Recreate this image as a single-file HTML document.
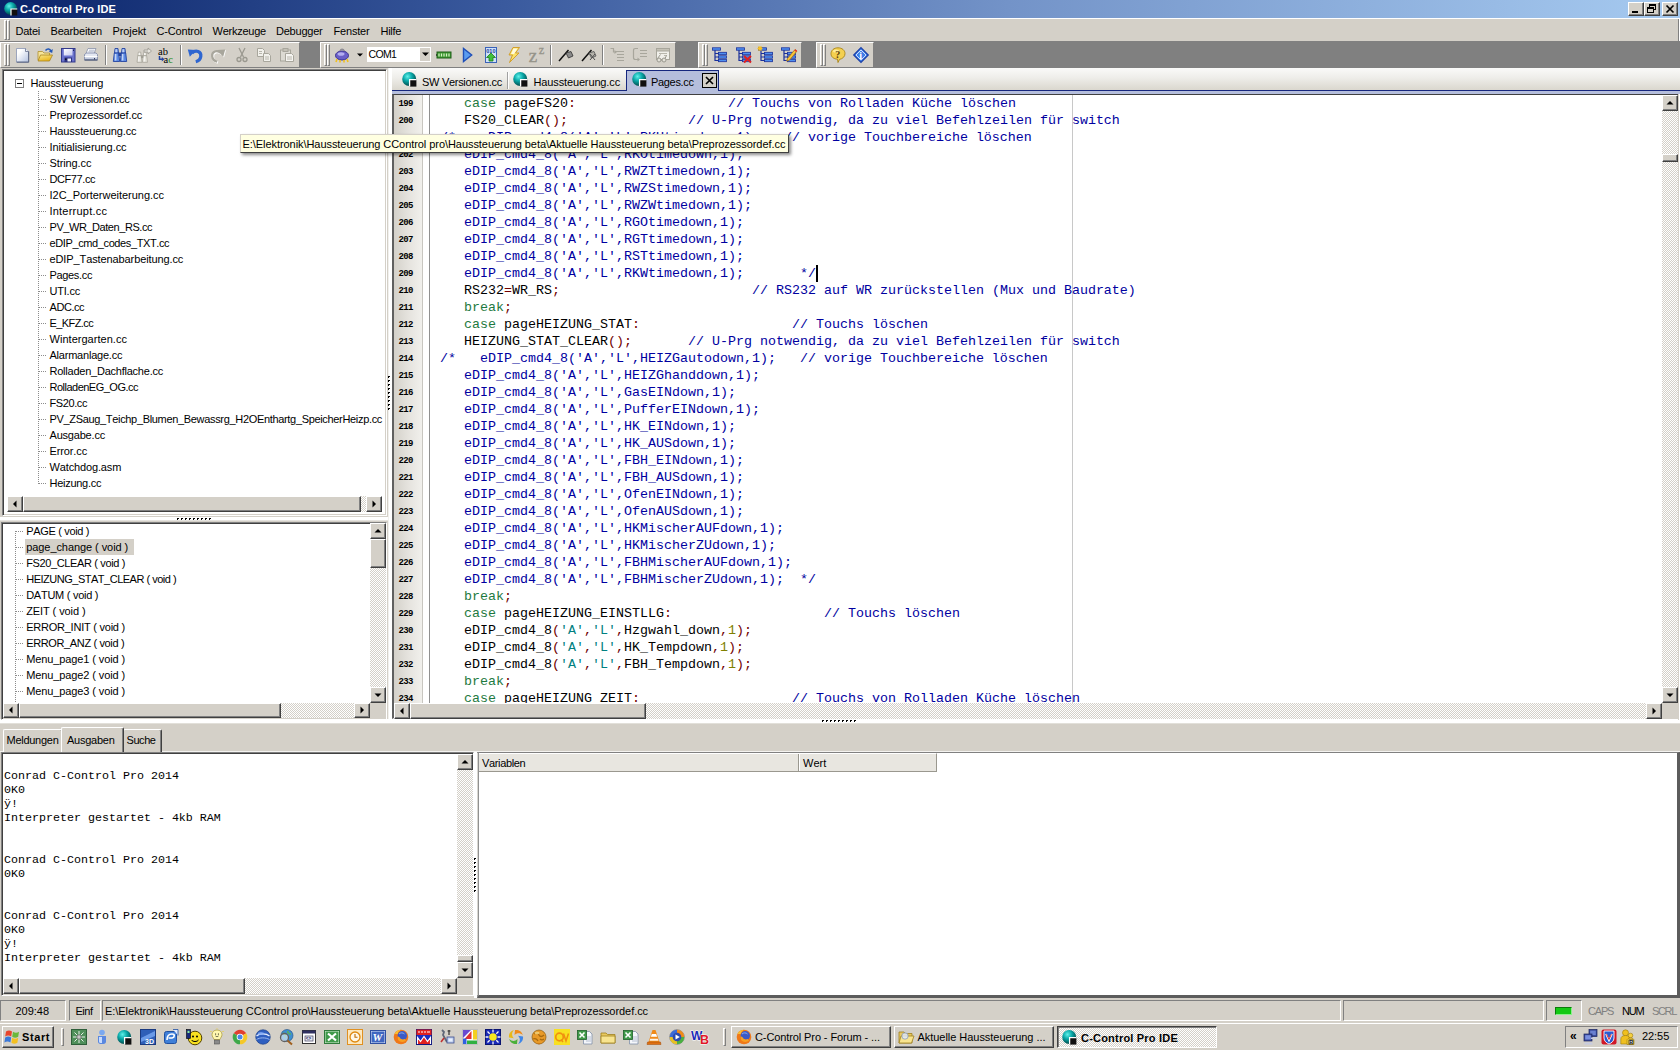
<!DOCTYPE html><html><head><meta charset="utf-8"><title>C-Control Pro IDE</title><style>
*{box-sizing:border-box;margin:0;padding:0}
html,body{width:1680px;height:1050px;overflow:hidden;background:#d4d0c8}
body{font-kerning:none;font-family:"Liberation Sans",sans-serif;font-size:11px;color:#000;position:relative}
.a{position:absolute}
.t{position:absolute;white-space:pre;line-height:13px;height:13px}
.rs{border:1px solid;border-color:#fff #404040 #404040 #fff;box-shadow:inset -1px -1px 0 #808080,inset 1px 1px 0 #d4d0c8;background:#d4d0c8}
.rs2{border:1px solid;border-color:#d4d0c8 #404040 #404040 #d4d0c8;box-shadow:inset -1px -1px 0 #808080,inset 1px 1px 0 #fff;background:#d4d0c8}
.sk{border:1px solid;border-color:#808080 #fff #fff #808080;box-shadow:inset 1px 1px 0 #404040,inset -1px -1px 0 #d4d0c8;background:#fff}
.sk1{border:1px solid;border-color:#808080 #fff #fff #808080}
.tr{background:repeating-conic-gradient(#fff 0 25%,#d4d0c8 0 50%) 0 0/2px 2px}
.band{position:absolute;top:42px;height:26px;background:#d4d0c8;border-top:1px solid #fff;border-left:1px solid #fff;border-right:1px solid #808080;border-bottom:1px solid #808080}
.grip{position:absolute;width:3px;border:1px solid;border-color:#fff #808080 #808080 #fff}
.sep{position:absolute;width:2px;border-left:1px solid #808080;border-right:1px solid #fff}
.mono{font-family:"Liberation Mono",monospace}
.code{position:absolute;left:432px;white-space:pre;font-family:"Liberation Mono",monospace;font-size:13.33px;line-height:17px;height:17px;color:#000}
.ln{position:absolute;left:398.5px;white-space:pre;font-family:"Liberation Mono",monospace;font-weight:bold;font-size:9px;line-height:17px;height:17px;color:#000;letter-spacing:-0.7px}
.k{color:#1e7a40}.c{color:#0000a0}.s{color:#700000}.q{color:#008080}.n{color:#808000}
svg{position:absolute;overflow:visible}
</style></head><body>
<div class="a " style="left:0px;top:0px;width:1680px;height:18px;background:linear-gradient(90deg,#0a246a 0%,#3a5a9e 30%,#7393c8 60%,#a6caf0 100%)"></div>
<svg style="left:3.8px;top:1.6px" width="13.8" height="13.8" viewBox="0 0 15 15"><defs><radialGradient id="cg1" cx="0.38" cy="0.32" r="0.7"><stop offset="0" stop-color="#5ff0e8"/><stop offset="0.45" stop-color="#0aa8a8"/><stop offset="1" stop-color="#004848"/></radialGradient></defs><circle cx="7.2" cy="7" r="7" fill="url(#cg1)"/><rect x="7.6" y="7.600" width="6.800" height="7" fill="#101010"/><path d="M7.600 14.600V7.600H14.400" fill="none" stroke="#fff" stroke-width="1.300"/></svg>
<div class="t " style="left:20px;top:2.5px;font-weight:bold;letter-spacing:0.147px;color:#fff">C-Control Pro IDE</div>
<div class="a rs" style="left:1628px;top:2px;width:16px;height:14px;"></div>
<div class="a rs" style="left:1644px;top:2px;width:16px;height:14px;"></div>
<div class="a rs" style="left:1662px;top:2px;width:16px;height:14px;"></div>
<svg style="left:1628px;top:2px" width="16" height="14" viewBox="0 0 16 14"><rect x="4" y="9" width="6" height="2" fill="#000"/></svg>
<svg style="left:1644px;top:2px" width="16" height="14" viewBox="0 0 16 14"><rect x="5.5" y="2.5" width="6" height="5" fill="none" stroke="#000"/><rect x="5" y="2" width="7" height="2" fill="#000"/><rect x="3.5" y="5.5" width="6" height="5" fill="#d4d0c8" stroke="#000"/><rect x="3" y="5" width="7" height="2" fill="#000"/></svg>
<svg style="left:1662px;top:2px" width="16" height="14" viewBox="0 0 16 14"><path d="M4.5 3.5l7 7M11.5 3.5l-7 7" stroke="#000" stroke-width="1.7" fill="none"/></svg>
<div class="a " style="left:0px;top:18px;width:1680px;height:1px;background:#fff"></div>
<div class="a " style="left:0px;top:19px;width:1680px;height:22px;background:#d4d0c8"></div>
<div class="a " style="left:1678px;top:19px;width:1px;height:22px;background:#808080"></div>
<div class="a " style="left:1679px;top:19px;width:1px;height:22px;background:#fff"></div>
<div class="a grip" style="left:4px;top:20px;width:3px;height:20px;"></div>
<div class="a grip" style="left:7px;top:20px;width:3px;height:20px;"></div>
<div class="t " style="left:15.5px;top:25px;letter-spacing:-0.236px;">Datei</div>
<div class="t " style="left:50.5px;top:25px;letter-spacing:-0.171px;">Bearbeiten</div>
<div class="t " style="left:112.5px;top:25px;letter-spacing:-0.105px;">Projekt</div>
<div class="t " style="left:156.5px;top:25px;letter-spacing:-0.174px;">C-Control</div>
<div class="t " style="left:212.5px;top:25px;letter-spacing:-0.237px;">Werkzeuge</div>
<div class="t " style="left:276px;top:25px;letter-spacing:-0.227px;">Debugger</div>
<div class="t " style="left:333.5px;top:25px;letter-spacing:-0.185px;">Fenster</div>
<div class="t " style="left:380.5px;top:25px;letter-spacing:-0.301px;">Hilfe</div>
<div class="a " style="left:0px;top:41px;width:1680px;height:27px;background:#808080"></div>
<div class="band" style="left:0px;width:300px"></div>
<div class="a grip" style="left:4px;top:44px;width:3px;height:22px;"></div>
<div class="a grip" style="left:7px;top:44px;width:3px;height:22px;"></div>
<div class="band" style="left:320px;width:356px"></div>
<div class="a grip" style="left:324px;top:44px;width:3px;height:22px;"></div>
<div class="a grip" style="left:327px;top:44px;width:3px;height:22px;"></div>
<div class="band" style="left:698px;width:104px"></div>
<div class="a grip" style="left:702px;top:44px;width:3px;height:22px;"></div>
<div class="a grip" style="left:705px;top:44px;width:3px;height:22px;"></div>
<div class="band" style="left:816px;width:58px"></div>
<div class="a grip" style="left:820px;top:44px;width:3px;height:22px;"></div>
<div class="a grip" style="left:823px;top:44px;width:3px;height:22px;"></div>
<svg style="left:15px;top:47px" width="16" height="16" viewBox="0 0 16 16"><defs><linearGradient id="gnew" x1="0" y1="0" x2="1" y2="1"><stop offset="0.25" stop-color="#fff"/><stop offset="1" stop-color="#b4c2e0"/></linearGradient></defs><path d="M1.5 1.5h9l3 3v10.500h-12z" fill="url(#gnew)" stroke="#8894b4" stroke-width="0.8"/><path d="M10.500 1.500v3h3" fill="#eef2fa" stroke="#66708c" stroke-width="0.8"/><path d="M13.700 4.500v10.700h-12" fill="none" stroke="#58627e" stroke-width="1"/></svg>
<svg style="left:37px;top:47px" width="16" height="16" viewBox="0 0 16 16"><defs><linearGradient id="gop" x1="0" y1="0" x2="0.6" y2="1"><stop offset="0" stop-color="#fbe88c"/><stop offset="1" stop-color="#e8b41c"/></linearGradient></defs><path d="M1 4.500h4.500l1.500 1.500h5.500V13H1z" fill="#f6e49a" stroke="#b09030" stroke-width="0.8"/><path d="M3.500 8h12l-3 6H1z" fill="url(#gop)" stroke="#a88420" stroke-width="0.8"/><path d="M8.500 3.500c1.800-2.200 4.500-2 5.500 0.800" fill="none" stroke="#2458b8" stroke-width="1.500"/><path d="M15.800 2l-0.600 4-3.400-1.500z" fill="#2458b8"/></svg>
<svg style="left:60px;top:47px" width="16" height="16" viewBox="0 0 16 16"><defs><linearGradient id="gsv" x1="0" y1="0" x2="1" y2="1"><stop offset="0" stop-color="#fff"/><stop offset="1" stop-color="#c4c8f0"/></linearGradient></defs><rect x="1.500" y="1.500" width="13.500" height="13.500" fill="#6a72cc" stroke="#343a8c"/><rect x="3.800" y="2" width="8.700" height="6.500" fill="url(#gsv)"/><rect x="13" y="2.500" width="1" height="1.500" fill="#20245c"/><rect x="4.500" y="10.500" width="7.500" height="4.500" fill="#2c3180"/><rect x="7.500" y="11.500" width="3.500" height="3" fill="#f0f2fc"/><rect x="5" y="11.500" width="1.500" height="1.500" fill="#0c0c20"/></svg>
<svg style="left:83px;top:47px" width="16" height="16" viewBox="0 0 16 16"><path d="M5 1.500h8l-2 5H3z" fill="#fff" stroke="#8890a8" stroke-width="0.8"/><path d="M6 3.200h5.500M5.300 4.800h5.500" stroke="#a0a8c0" stroke-width="0.8"/><path d="M1.500 7.500L3.500 6h9.500l1.500 1.500v5h-13z" fill="#e4e8f2" stroke="#7884a4" stroke-width="0.8"/><path d="M1.500 9.500h13" stroke="#fff"/><rect x="2" y="10.500" width="12" height="2.500" fill="#c4cce0"/><path d="M1.500 13h13" stroke="#4c5878" stroke-width="1.400"/><rect x="11" y="11" width="1" height="1.500" fill="#384060"/></svg>
<svg style="left:112px;top:47px" width="16" height="16" viewBox="0 0 16 16"><path d="M3 1.500h3l0.500 4.500h-4z" fill="#86a8ec" stroke="#2444a0" stroke-width="0.9"/><path d="M10 1.500h3l0.500 4.500h-4z" fill="#86a8ec" stroke="#2444a0" stroke-width="0.9"/><path d="M2.300 6h4.400l1 8.500H1.300z" fill="#5c8ae4" stroke="#2444a0" stroke-width="0.9"/><path d="M9.300 6h4.400l1 8.500H8.300z" fill="#5c8ae4" stroke="#2444a0" stroke-width="0.9"/><rect x="6.500" y="5.500" width="3" height="3.500" fill="#2444a0"/><rect x="2.800" y="7" width="1.600" height="6.500" fill="#fff" opacity="0.65"/><rect x="9.800" y="7" width="1.600" height="6.500" fill="#fff" opacity="0.65"/><rect x="3.500" y="2.300" width="1.200" height="3" fill="#fff" opacity="0.6"/><rect x="10.500" y="2.300" width="1.200" height="3" fill="#fff" opacity="0.6"/></svg>
<svg style="left:136px;top:47px" width="16" height="16" viewBox="0 0 16 16"><g transform="translate(0,4) scale(0.78)"><path d="M3 1.500h3l0.500 4.500h-4z" fill="#f2f0ea" stroke="#a09e94" stroke-width="0.9"/><path d="M10 1.500h3l0.500 4.500h-4z" fill="#f2f0ea" stroke="#a09e94" stroke-width="0.9"/><path d="M2.300 6h4.400l1 8.500H1.300z" fill="#e6e4dc" stroke="#a09e94" stroke-width="0.9"/><path d="M9.300 6h4.400l1 8.500H8.300z" fill="#e6e4dc" stroke="#a09e94" stroke-width="0.9"/><rect x="6.500" y="5.500" width="3" height="3.500" fill="#a09e94"/><rect x="2.800" y="7" width="1.600" height="6.500" fill="#fff" opacity="0.65"/><rect x="9.800" y="7" width="1.600" height="6.500" fill="#fff" opacity="0.65"/><rect x="3.500" y="2.300" width="1.200" height="3" fill="#fff" opacity="0.6"/><rect x="10.500" y="2.300" width="1.200" height="3" fill="#fff" opacity="0.6"/></g><path d="M8 3h4V1l3.5 3L12 7V5H8z" fill="#e8e6e0" stroke="#9a988f" stroke-width="0.8"/></svg>
<svg style="left:158px;top:47px" width="16" height="16" viewBox="0 0 16 16"><text x="0" y="7.500" font-family="Liberation Serif,serif" font-size="10.5" fill="#000">ab</text><text x="5.500" y="15.500" font-family="Liberation Serif,serif" font-size="10.5" fill="#000">a</text><text x="10.300" y="15.500" font-family="Liberation Serif,serif" font-size="10.5" fill="#1c8a1c">c</text><path d="M1.500 9v3.300h3" fill="none" stroke="#2444a0" stroke-width="1.500"/><path d="M3.800 10l2.700 2.300-2.700 2.300z" fill="#2444a0"/></svg>
<svg style="left:187px;top:47px" width="16" height="16" viewBox="0 0 16 16"><g><path d="M5 6C9 2.500 14.500 4.500 13.800 9.500c-0.400 2.700-2.300 4.500-5 5.200" fill="none" stroke="#2f66d0" stroke-width="3.2"/><path d="M0.800 2.500l8.200 0.500-6.200 6.800z" fill="#2f66d0"/></g></svg>
<svg style="left:210px;top:47px" width="16" height="16" viewBox="0 0 16 16"><g transform="translate(0.8,0.8)"><g transform="translate(16,0) scale(-1,1)"><path d="M5 6C9 2.500 14.500 4.500 13.800 9.500c-0.400 2.700-2.300 4.500-5 5.200" fill="none" stroke="#fff" stroke-width="2.4"/><path d="M0.800 2.500l8.200 0.500-6.200 6.800z" fill="#fff"/></g></g><g transform="translate(16,0) scale(-1,1)"><path d="M5 6C9 2.500 14.500 4.500 13.800 9.500c-0.400 2.700-2.300 4.500-5 5.200" fill="none" stroke="#a8a69c" stroke-width="2.2"/><path d="M0.800 2.500l8.200 0.500-6.200 6.800z" fill="#a8a69c"/></g></svg>
<svg style="left:234px;top:47px" width="16" height="16" viewBox="0 0 16 16"><path d="M5 1l4.5 9M11 1L6.5 10" stroke="#9a988f" stroke-width="1.3" fill="none"/><circle cx="5" cy="12.5" r="2" fill="none" stroke="#9a988f" stroke-width="1.3"/><circle cx="11" cy="12.5" r="2" fill="none" stroke="#9a988f" stroke-width="1.3"/></svg>
<svg style="left:256px;top:47px" width="16" height="16" viewBox="0 0 16 16"><path d="M1.5 1.5h5l2 2v6h-7z" fill="#f2f1ec" stroke="#a8a69c"/><path d="M7.5 6.5h5l2 2v6h-7z" fill="#f2f1ec" stroke="#a8a69c"/><path d="M3 4.5h3M3 6.5h3M9 10h4M9 12h4" stroke="#b8b6ac"/></svg>
<svg style="left:279px;top:47px" width="16" height="16" viewBox="0 0 16 16"><rect x="1.5" y="3" width="10" height="11" fill="#dcdad2" stroke="#a8a69c"/><rect x="4" y="1.5" width="5" height="3" fill="#c4c1b6" stroke="#a8a69c"/><path d="M6.5 6.5h6l2 2v6h-8z" fill="#f6f5f1" stroke="#a8a69c"/><path d="M8 10h5M8 12h5" stroke="#b8b6ac"/></svg>
<svg style="left:334px;top:47px" width="16" height="16" viewBox="0 0 16 16"><ellipse cx="8" cy="8.5" rx="6.5" ry="4.5" fill="#6a5fc8" stroke="#3a3190"/><ellipse cx="7" cy="7" rx="3.5" ry="1.8" fill="#b4aef0"/><path d="M6 4c1-2.5 3-2.5 4.5 0" fill="none" stroke="#8a8890" stroke-width="1.3"/><path d="M3 12l-1 3M6 13v2.5M10 13v2.5M13 12l1 3" stroke="#f0c020" stroke-width="1.6"/></svg>
<svg style="left:436px;top:47px" width="16" height="16" viewBox="0 0 16 16"><rect x="1" y="5" width="14" height="6" fill="#3f9a32" stroke="#1f5c18"/><path d="M3 6.5v3M5.5 6.5v3M8 6.5v3M10.5 6.5v3M13 6.5v3" stroke="#d8f0c8" stroke-width="1.2"/><path d="M0 8h1" stroke="#000"/></svg>
<svg style="left:460px;top:47px" width="16" height="16" viewBox="0 0 16 16"><path d="M3.500 1.500v13l8.200-6.500z" fill="#5a9cf0" stroke="#1f4fb8" stroke-width="1.400"/></svg>
<svg style="left:483px;top:47px" width="16" height="16" viewBox="0 0 16 16"><rect x="2.5" y="0.5" width="11" height="15" fill="#cfe2fa" stroke="#3a62b8"/><text x="3.3" y="5.5" font-family="Liberation Sans,sans-serif" font-size="5.5" font-weight="bold" fill="#1f3f9a">010</text><path d="M8 6l4.5 4.5H10V14H6v-3.5H3.5z" fill="#3fc03a" stroke="#1f7a1c" stroke-width="0.8"/></svg>
<svg style="left:506px;top:47px" width="16" height="16" viewBox="0 0 16 16"><path d="M7 0.500h6.500L9.500 6h3.500L3.500 15.500 6.500 8H3z" fill="#fbe26a" stroke="#d09a20" stroke-width="0.9"/><path d="M7.500 1.500h4l-3.500 5.500h-3z" fill="#fffbe0"/></svg>
<svg style="left:529px;top:47px" width="16" height="16" viewBox="0 0 16 16"><text x="-0.300" y="15" font-family="Liberation Serif,serif" font-size="19" fill="#96948a" stroke="#96948a" stroke-width="0.4">z</text><text x="9.800" y="7" font-family="Liberation Serif,serif" font-size="12.5" fill="#96948a" stroke="#96948a" stroke-width="0.3">z</text></svg>
<svg style="left:558px;top:47px" width="16" height="16" viewBox="0 0 16 16"><path d="M1 14L10.5 3" stroke="#101010" stroke-width="1.5"/><path d="M8 6l5-1.5 2 4.5-4.5 2z" fill="#8a8a8a" stroke="#303030" stroke-width="0.8"/></svg>
<svg style="left:581px;top:47px" width="16" height="16" viewBox="0 0 16 16"><path d="M1 14L10.5 3" stroke="#101010" stroke-width="1.5"/><path d="M8 6l5-1.5 2 4.5-4.5 2z" fill="#b4b2aa" stroke="#505050" stroke-width="0.8"/><path d="M9 7l5 6M14 7l-5 6" stroke="#505050"/></svg>
<svg style="left:609px;top:47px" width="16" height="16" viewBox="0 0 16 16"><path d="M6 4.5h9M8 7.5h7M8 10.5h7M8 13.5h7" stroke="#a8a69c" stroke-width="1.2"/><path d="M1.5 1.5h3v3.5h2" fill="none" stroke="#a8a69c" stroke-width="1.2"/><path d="M5.5 3l2.5 2-2.5 2z" fill="#a8a69c"/></svg>
<svg style="left:632px;top:47px" width="16" height="16" viewBox="0 0 16 16"><path d="M8 3.5h7M8 6.5h7M8 9.5h7" stroke="#a8a69c" stroke-width="1.2"/><path d="M6 1.5H3.5C2 1.5 1.5 2 1.5 3.5v7c0 1.5 0.5 2 2 2H6" fill="none" stroke="#a8a69c" stroke-width="1.2"/><path d="M5.5 10.5l2.5 2-2.5 2z" fill="#a8a69c"/></svg>
<svg style="left:655px;top:47px" width="16" height="16" viewBox="0 0 16 16"><rect x="1.5" y="1.5" width="13" height="11" fill="#f0efea" stroke="#a8a69c"/><rect x="1.5" y="1.5" width="13" height="2.5" fill="#c4c1b6" stroke="#a8a69c"/><path d="M4 6.5h8M9 8.5h3" stroke="#b8b6ac"/><circle cx="4" cy="13" r="2" fill="#e4e2da" stroke="#9a988f"/><circle cx="9" cy="13" r="2" fill="#e4e2da" stroke="#9a988f"/><path d="M6 13h1M2.5 11.5l3-4M10 11.5l1.5-3" stroke="#9a988f"/></svg>
<svg style="left:712px;top:47px" width="16" height="16" viewBox="0 0 16 16"><path d="M3 3v10.5h4M3 6.5h4M3 10h4" fill="none" stroke="#1a2f9a" stroke-width="1.2"/><rect x="0.5" y="0.8" width="8" height="2.4" fill="#4f8ff0" stroke="#1a2f9a" stroke-width="0.8"/><rect x="6.5" y="5.3" width="8" height="2.4" fill="#4f8ff0" stroke="#1a2f9a" stroke-width="0.8"/><rect x="6.5" y="8.8" width="8" height="2.4" fill="#4f8ff0" stroke="#1a2f9a" stroke-width="0.8"/><rect x="6.5" y="12.3" width="8" height="2.4" fill="#4f8ff0" stroke="#1a2f9a" stroke-width="0.8"/></svg>
<svg style="left:736px;top:47px" width="16" height="16" viewBox="0 0 16 16"><path d="M3 3v10.5h4M3 6.5h4M3 10h4" fill="none" stroke="#1a2f9a" stroke-width="1.2"/><rect x="0.5" y="0.8" width="8" height="2.4" fill="#4f8ff0" stroke="#1a2f9a" stroke-width="0.8"/><rect x="6.5" y="5.3" width="8" height="2.4" fill="#4f8ff0" stroke="#1a2f9a" stroke-width="0.8"/><rect x="6.5" y="8.8" width="8" height="2.4" fill="#4f8ff0" stroke="#1a2f9a" stroke-width="0.8"/><rect x="6.5" y="12.3" width="8" height="2.4" fill="#4f8ff0" stroke="#1a2f9a" stroke-width="0.8"/><path d="M8 9l7 6.5M15 9l-7 6.5" stroke="#e02020" stroke-width="2"/></svg>
<svg style="left:758px;top:47px" width="16" height="16" viewBox="0 0 16 16"><path d="M3 3v10.5h4M3 6.5h4M3 10h4" fill="none" stroke="#1a2f9a" stroke-width="1.2"/><rect x="0.5" y="0.8" width="8" height="2.4" fill="#4f8ff0" stroke="#1a2f9a" stroke-width="0.8"/><rect x="6.5" y="5.3" width="8" height="2.4" fill="#4f8ff0" stroke="#1a2f9a" stroke-width="0.8"/><rect x="6.5" y="8.8" width="8" height="2.4" fill="#4f8ff0" stroke="#1a2f9a" stroke-width="0.8"/><rect x="6.5" y="12.3" width="8" height="2.4" fill="#4f8ff0" stroke="#1a2f9a" stroke-width="0.8"/><path d="M2 -1v5M-0.5 1.5h5M0.2 -0.3l3.6 3.6M3.8 -0.3l-3.6 3.6" stroke="#f8c020" stroke-width="1.1"/></svg>
<svg style="left:781px;top:47px" width="16" height="16" viewBox="0 0 16 16"><path d="M3 3v10.5h4M3 6.5h4M3 10h4" fill="none" stroke="#1a2f9a" stroke-width="1.2"/><rect x="0.5" y="0.8" width="8" height="2.4" fill="#4f8ff0" stroke="#1a2f9a" stroke-width="0.8"/><rect x="6.5" y="5.3" width="8" height="2.4" fill="#4f8ff0" stroke="#1a2f9a" stroke-width="0.8"/><rect x="6.5" y="8.8" width="8" height="2.4" fill="#4f8ff0" stroke="#1a2f9a" stroke-width="0.8"/><rect x="6.5" y="12.3" width="8" height="2.4" fill="#4f8ff0" stroke="#1a2f9a" stroke-width="0.8"/><path d="M6.5 11.5L14 2.5l2 1.6-7.5 9-2.8 1z" fill="#f8c43a" stroke="#b07a10" stroke-width="0.8"/><path d="M13.2 3.4l2 1.6 1-1.2-2-1.6z" fill="#e03030"/></svg>
<svg style="left:830px;top:47px" width="16" height="16" viewBox="0 0 16 16"><path d="M8 0.8c4 0 7 2.5 7 5.8 0 3-2.3 5.2-5.5 5.8L8 15.5l-0.5-3.3C3.5 12 1 9.8 1 6.6 1 3.3 4 0.8 8 0.8z" fill="#f4d050" stroke="#a88418" stroke-width="0.9"/><ellipse cx="6" cy="4" rx="3" ry="1.6" fill="#fff4b0" opacity="0.8"/><text x="5.2" y="10.5" font-family="Liberation Serif,serif" font-size="10" font-weight="bold" fill="#5a3c08">?</text></svg>
<svg style="left:853px;top:47px" width="16" height="16" viewBox="0 0 16 16"><path d="M8 0.7L15.3 8 8 15.3 0.7 8z" fill="#3f7fe8" stroke="#1a3fa8" stroke-width="1.2"/><path d="M8 3L13 8 8 13 3 8z" fill="none" stroke="#dfeaff" stroke-width="0.9"/><text x="6.2" y="11.5" font-family="Liberation Serif,serif" font-size="10" font-weight="bold" fill="#fff">i</text></svg>
<div class="sep" style="left:105px;top:45px;height:20px"></div>
<div class="sep" style="left:180px;top:45px;height:20px"></div>
<div class="sep" style="left:550px;top:45px;height:20px"></div>
<div class="sep" style="left:602px;top:45px;height:20px"></div>
<svg style="left:355px;top:47px" width="10" height="16" viewBox="0 0 10 16"><polygon points="2,6.5 8,6.5 5,9.5" fill="#000"/></svg>
<div class="a " style="left:367px;top:47px;width:64px;height:15px;background:#fff"></div>
<div class="t " style="left:368.5px;top:48px;font-size:10.5px;letter-spacing:-0.634px;">COM1</div>
<div class="a " style="left:420px;top:48px;width:10px;height:13px;background:#d4d0c8"></div>
<svg style="left:420px;top:46px" width="11" height="16" viewBox="0 0 11 16"><polygon points="2,6.5 9,6.5 5.5,10" fill="#000"/></svg>
<div class="a " style="left:0px;top:719px;width:1680px;height:5px;background:linear-gradient(180deg,#fff 0,#fff 70%,#d4d0c8 100%)"></div>
<div class="a " style="left:388px;top:68px;width:4px;height:651px;background:linear-gradient(90deg,#e8e6e0 0,#fff 30%,#fff 100%)"></div>
<div class="a " style="left:0px;top:517px;width:388px;height:4px;background:linear-gradient(180deg,#fff 0,#fff 70%,#d4d0c8 100%)"></div>
<div class="a " style="left:474px;top:752px;width:3px;height:246px;background:#fff"></div>
<div class="a sk" style="left:2px;top:69px;width:385px;height:447px;"></div>
<div class="a " style="left:15px;top:79px;width:9px;height:9px;border:1px solid #808080;background:#fff"></div>
<div class="a " style="left:17px;top:83px;width:5px;height:1px;background:#000"></div>
<div class="t " style="left:30.5px;top:77px;letter-spacing:-0.154px;">Haussteuerung</div>
<div class="a " style="left:38px;top:91px;width:1px;height:393px;background:repeating-linear-gradient(180deg,#8c8c8c 0 1px,transparent 1px 2px)"></div>
<div class="a " style="left:39px;top:99px;width:8px;height:1px;background:repeating-linear-gradient(90deg,#8c8c8c 0 1px,transparent 1px 2px)"></div>
<div class="t " style="left:49.5px;top:93px;letter-spacing:-0.291px;">SW Versionen.cc</div>
<div class="a " style="left:39px;top:115px;width:8px;height:1px;background:repeating-linear-gradient(90deg,#8c8c8c 0 1px,transparent 1px 2px)"></div>
<div class="t " style="left:49.5px;top:109px;letter-spacing:-0.115px;">Preprozessordef.cc</div>
<div class="a " style="left:39px;top:131px;width:8px;height:1px;background:repeating-linear-gradient(90deg,#8c8c8c 0 1px,transparent 1px 2px)"></div>
<div class="t " style="left:49.5px;top:125px;letter-spacing:-0.104px;">Haussteuerung.cc</div>
<div class="a " style="left:39px;top:147px;width:8px;height:1px;background:repeating-linear-gradient(90deg,#8c8c8c 0 1px,transparent 1px 2px)"></div>
<div class="t " style="left:49.5px;top:141px;letter-spacing:-0.070px;">Initialisierung.cc</div>
<div class="a " style="left:39px;top:163px;width:8px;height:1px;background:repeating-linear-gradient(90deg,#8c8c8c 0 1px,transparent 1px 2px)"></div>
<div class="t " style="left:49.5px;top:157px;letter-spacing:-0.110px;">String.cc</div>
<div class="a " style="left:39px;top:179px;width:8px;height:1px;background:repeating-linear-gradient(90deg,#8c8c8c 0 1px,transparent 1px 2px)"></div>
<div class="t " style="left:49.5px;top:173px;letter-spacing:-0.412px;">DCF77.cc</div>
<div class="a " style="left:39px;top:195px;width:8px;height:1px;background:repeating-linear-gradient(90deg,#8c8c8c 0 1px,transparent 1px 2px)"></div>
<div class="t " style="left:49.5px;top:189px;letter-spacing:-0.020px;">I2C_Porterweiterung.cc</div>
<div class="a " style="left:39px;top:211px;width:8px;height:1px;background:repeating-linear-gradient(90deg,#8c8c8c 0 1px,transparent 1px 2px)"></div>
<div class="t " style="left:49.5px;top:205px;letter-spacing:0.215px;">Interrupt.cc</div>
<div class="a " style="left:39px;top:227px;width:8px;height:1px;background:repeating-linear-gradient(90deg,#8c8c8c 0 1px,transparent 1px 2px)"></div>
<div class="t " style="left:49.5px;top:221px;letter-spacing:-0.444px;">PV_WR_Daten_RS.cc</div>
<div class="a " style="left:39px;top:243px;width:8px;height:1px;background:repeating-linear-gradient(90deg,#8c8c8c 0 1px,transparent 1px 2px)"></div>
<div class="t " style="left:49.5px;top:237px;letter-spacing:-0.384px;">eDIP_cmd_codes_TXT.cc</div>
<div class="a " style="left:39px;top:259px;width:8px;height:1px;background:repeating-linear-gradient(90deg,#8c8c8c 0 1px,transparent 1px 2px)"></div>
<div class="t " style="left:49.5px;top:253px;letter-spacing:-0.106px;">eDIP_Tastenabarbeitung.cc</div>
<div class="a " style="left:39px;top:275px;width:8px;height:1px;background:repeating-linear-gradient(90deg,#8c8c8c 0 1px,transparent 1px 2px)"></div>
<div class="t " style="left:49.5px;top:269px;letter-spacing:-0.331px;">Pages.cc</div>
<div class="a " style="left:39px;top:291px;width:8px;height:1px;background:repeating-linear-gradient(90deg,#8c8c8c 0 1px,transparent 1px 2px)"></div>
<div class="t " style="left:49.5px;top:285px;letter-spacing:-0.213px;">UTI.cc</div>
<div class="a " style="left:39px;top:307px;width:8px;height:1px;background:repeating-linear-gradient(90deg,#8c8c8c 0 1px,transparent 1px 2px)"></div>
<div class="t " style="left:49.5px;top:301px;letter-spacing:-0.447px;">ADC.cc</div>
<div class="a " style="left:39px;top:323px;width:8px;height:1px;background:repeating-linear-gradient(90deg,#8c8c8c 0 1px,transparent 1px 2px)"></div>
<div class="t " style="left:49.5px;top:317px;letter-spacing:-0.586px;">E_KFZ.cc</div>
<div class="a " style="left:39px;top:339px;width:8px;height:1px;background:repeating-linear-gradient(90deg,#8c8c8c 0 1px,transparent 1px 2px)"></div>
<div class="t " style="left:49.5px;top:333px;letter-spacing:0.032px;">Wintergarten.cc</div>
<div class="a " style="left:39px;top:355px;width:8px;height:1px;background:repeating-linear-gradient(90deg,#8c8c8c 0 1px,transparent 1px 2px)"></div>
<div class="t " style="left:49.5px;top:349px;letter-spacing:-0.222px;">Alarmanlage.cc</div>
<div class="a " style="left:39px;top:371px;width:8px;height:1px;background:repeating-linear-gradient(90deg,#8c8c8c 0 1px,transparent 1px 2px)"></div>
<div class="t " style="left:49.5px;top:365px;letter-spacing:-0.233px;">Rolladen_Dachflache.cc</div>
<div class="a " style="left:39px;top:387px;width:8px;height:1px;background:repeating-linear-gradient(90deg,#8c8c8c 0 1px,transparent 1px 2px)"></div>
<div class="t " style="left:49.5px;top:381px;letter-spacing:-0.506px;">RolladenEG_OG.cc</div>
<div class="a " style="left:39px;top:403px;width:8px;height:1px;background:repeating-linear-gradient(90deg,#8c8c8c 0 1px,transparent 1px 2px)"></div>
<div class="t " style="left:49.5px;top:397px;letter-spacing:-0.407px;">FS20.cc</div>
<div class="a " style="left:39px;top:419px;width:8px;height:1px;background:repeating-linear-gradient(90deg,#8c8c8c 0 1px,transparent 1px 2px)"></div>
<div class="t " style="left:49.5px;top:413px;letter-spacing:-0.328px;">PV_ZSaug_Teichp_Blumen_Bewassrg_H2OEnthartg_SpeicherHeizp.cc</div>
<div class="a " style="left:39px;top:435px;width:8px;height:1px;background:repeating-linear-gradient(90deg,#8c8c8c 0 1px,transparent 1px 2px)"></div>
<div class="t " style="left:49.5px;top:429px;letter-spacing:-0.198px;">Ausgabe.cc</div>
<div class="a " style="left:39px;top:451px;width:8px;height:1px;background:repeating-linear-gradient(90deg,#8c8c8c 0 1px,transparent 1px 2px)"></div>
<div class="t " style="left:49.5px;top:445px;letter-spacing:-0.125px;">Error.cc</div>
<div class="a " style="left:39px;top:467px;width:8px;height:1px;background:repeating-linear-gradient(90deg,#8c8c8c 0 1px,transparent 1px 2px)"></div>
<div class="t " style="left:49.5px;top:461px;letter-spacing:-0.139px;">Watchdog.asm</div>
<div class="a " style="left:39px;top:483px;width:8px;height:1px;background:repeating-linear-gradient(90deg,#8c8c8c 0 1px,transparent 1px 2px)"></div>
<div class="t " style="left:49.5px;top:477px;letter-spacing:-0.271px;">Heizung.cc</div>
<div class="a tr" style="left:7px;top:496px;width:375px;height:16px;"></div>
<div class="a rs" style="left:7px;top:496px;width:16px;height:16px;"></div>
<svg style="left:7px;top:496px" width="16" height="16" viewBox="0 0 16 16"><polygon points="9.5,4.5 9.5,11.5 6,8" fill="#000"/></svg>
<div class="a rs" style="left:366px;top:496px;width:16px;height:16px;"></div>
<svg style="left:366px;top:496px" width="16" height="16" viewBox="0 0 16 16"><polygon points="6.5,4.5 6.5,11.5 10,8" fill="#000"/></svg>
<div class="a rs" style="left:23px;top:496px;width:338px;height:16px;"></div>
<div class="a " style="left:177px;top:518px;width:2px;height:2px;background:#000"></div>
<div class="a " style="left:178px;top:519px;width:2px;height:1px;background:#fff"></div>
<div class="a " style="left:181px;top:518px;width:2px;height:2px;background:#000"></div>
<div class="a " style="left:182px;top:519px;width:2px;height:1px;background:#fff"></div>
<div class="a " style="left:185px;top:518px;width:2px;height:2px;background:#000"></div>
<div class="a " style="left:186px;top:519px;width:2px;height:1px;background:#fff"></div>
<div class="a " style="left:189px;top:518px;width:2px;height:2px;background:#000"></div>
<div class="a " style="left:190px;top:519px;width:2px;height:1px;background:#fff"></div>
<div class="a " style="left:193px;top:518px;width:2px;height:2px;background:#000"></div>
<div class="a " style="left:194px;top:519px;width:2px;height:1px;background:#fff"></div>
<div class="a " style="left:197px;top:518px;width:2px;height:2px;background:#000"></div>
<div class="a " style="left:198px;top:519px;width:2px;height:1px;background:#fff"></div>
<div class="a " style="left:201px;top:518px;width:2px;height:2px;background:#000"></div>
<div class="a " style="left:202px;top:519px;width:2px;height:1px;background:#fff"></div>
<div class="a " style="left:205px;top:518px;width:2px;height:2px;background:#000"></div>
<div class="a " style="left:206px;top:519px;width:2px;height:1px;background:#fff"></div>
<div class="a " style="left:209px;top:518px;width:2px;height:2px;background:#000"></div>
<div class="a " style="left:210px;top:519px;width:2px;height:1px;background:#fff"></div>
<div class="a sk" style="left:1px;top:522px;width:386px;height:198px;"></div>
<div class="a " style="left:25px;top:539px;width:109px;height:16px;background:#d4d0c8"></div>
<div class="a " style="left:15px;top:531px;width:1px;height:171px;background:repeating-linear-gradient(180deg,#8c8c8c 0 1px,transparent 1px 2px)"></div>
<div class="a " style="left:16px;top:531px;width:8px;height:1px;background:repeating-linear-gradient(90deg,#8c8c8c 0 1px,transparent 1px 2px)"></div>
<div class="t " style="left:26.2px;top:525px;letter-spacing:-0.326px;">PAGE ( void )</div>
<div class="a " style="left:16px;top:547px;width:8px;height:1px;background:repeating-linear-gradient(90deg,#8c8c8c 0 1px,transparent 1px 2px)"></div>
<div class="t " style="left:26.2px;top:541px;letter-spacing:-0.068px;">page_change ( void )</div>
<div class="a " style="left:16px;top:563px;width:8px;height:1px;background:repeating-linear-gradient(90deg,#8c8c8c 0 1px,transparent 1px 2px)"></div>
<div class="t " style="left:26.2px;top:557px;letter-spacing:-0.366px;">FS20_CLEAR ( void )</div>
<div class="a " style="left:16px;top:579px;width:8px;height:1px;background:repeating-linear-gradient(90deg,#8c8c8c 0 1px,transparent 1px 2px)"></div>
<div class="t " style="left:26.2px;top:573px;letter-spacing:-0.489px;">HEIZUNG_STAT_CLEAR ( void )</div>
<div class="a " style="left:16px;top:595px;width:8px;height:1px;background:repeating-linear-gradient(90deg,#8c8c8c 0 1px,transparent 1px 2px)"></div>
<div class="t " style="left:26.2px;top:589px;letter-spacing:-0.270px;">DATUM ( void )</div>
<div class="a " style="left:16px;top:611px;width:8px;height:1px;background:repeating-linear-gradient(90deg,#8c8c8c 0 1px,transparent 1px 2px)"></div>
<div class="t " style="left:26.2px;top:605px;letter-spacing:-0.093px;">ZEIT ( void )</div>
<div class="a " style="left:16px;top:627px;width:8px;height:1px;background:repeating-linear-gradient(90deg,#8c8c8c 0 1px,transparent 1px 2px)"></div>
<div class="t " style="left:26.2px;top:621px;letter-spacing:-0.236px;">ERROR_INIT ( void )</div>
<div class="a " style="left:16px;top:643px;width:8px;height:1px;background:repeating-linear-gradient(90deg,#8c8c8c 0 1px,transparent 1px 2px)"></div>
<div class="t " style="left:26.2px;top:637px;letter-spacing:-0.362px;">ERROR_ANZ ( void )</div>
<div class="a " style="left:16px;top:659px;width:8px;height:1px;background:repeating-linear-gradient(90deg,#8c8c8c 0 1px,transparent 1px 2px)"></div>
<div class="t " style="left:26.2px;top:653px;letter-spacing:-0.110px;">Menu_page1 ( void )</div>
<div class="a " style="left:16px;top:675px;width:8px;height:1px;background:repeating-linear-gradient(90deg,#8c8c8c 0 1px,transparent 1px 2px)"></div>
<div class="t " style="left:26.2px;top:669px;letter-spacing:-0.110px;">Menu_page2 ( void )</div>
<div class="a " style="left:16px;top:691px;width:8px;height:1px;background:repeating-linear-gradient(90deg,#8c8c8c 0 1px,transparent 1px 2px)"></div>
<div class="t " style="left:26.2px;top:685px;letter-spacing:-0.110px;">Menu_page3 ( void )</div>
<div class="a tr" style="left:370px;top:523px;width:16px;height:180px;"></div>
<div class="a rs" style="left:370px;top:523px;width:16px;height:16px;"></div>
<svg style="left:370px;top:523px" width="16" height="16" viewBox="0 0 16 16"><polygon points="4.5,9.5 11.5,9.5 8,6" fill="#000"/></svg>
<div class="a rs" style="left:370px;top:687px;width:16px;height:16px;"></div>
<svg style="left:370px;top:687px" width="16" height="16" viewBox="0 0 16 16"><polygon points="4.5,6.5 11.5,6.5 8,10" fill="#000"/></svg>
<div class="a rs" style="left:370px;top:539px;width:16px;height:29px;"></div>
<div class="a tr" style="left:3px;top:703px;width:367px;height:15px;"></div>
<div class="a rs" style="left:3px;top:703px;width:16px;height:15px;"></div>
<svg style="left:3px;top:702px" width="16" height="16" viewBox="0 0 16 16"><polygon points="9.5,4.5 9.5,11.5 6,8" fill="#000"/></svg>
<div class="a rs" style="left:354px;top:703px;width:16px;height:15px;"></div>
<svg style="left:354px;top:702px" width="16" height="16" viewBox="0 0 16 16"><polygon points="6.5,4.5 6.5,11.5 10,8" fill="#000"/></svg>
<div class="a rs" style="left:19px;top:703px;width:262px;height:15px;"></div>
<div class="a " style="left:370px;top:703px;width:16px;height:15px;background:#d4d0c8"></div>
<div class="a " style="left:388px;top:376px;width:2px;height:2px;background:#000"></div>
<div class="a " style="left:389px;top:377px;width:1px;height:2px;background:#fff"></div>
<div class="a " style="left:388px;top:380px;width:2px;height:2px;background:#000"></div>
<div class="a " style="left:389px;top:381px;width:1px;height:2px;background:#fff"></div>
<div class="a " style="left:388px;top:384px;width:2px;height:2px;background:#000"></div>
<div class="a " style="left:389px;top:385px;width:1px;height:2px;background:#fff"></div>
<div class="a " style="left:388px;top:388px;width:2px;height:2px;background:#000"></div>
<div class="a " style="left:389px;top:389px;width:1px;height:2px;background:#fff"></div>
<div class="a " style="left:388px;top:392px;width:2px;height:2px;background:#000"></div>
<div class="a " style="left:389px;top:393px;width:1px;height:2px;background:#fff"></div>
<div class="a " style="left:388px;top:396px;width:2px;height:2px;background:#000"></div>
<div class="a " style="left:389px;top:397px;width:1px;height:2px;background:#fff"></div>
<div class="a " style="left:388px;top:400px;width:2px;height:2px;background:#000"></div>
<div class="a " style="left:389px;top:401px;width:1px;height:2px;background:#fff"></div>
<div class="a " style="left:388px;top:404px;width:2px;height:2px;background:#000"></div>
<div class="a " style="left:389px;top:405px;width:1px;height:2px;background:#fff"></div>
<div class="a " style="left:388px;top:408px;width:2px;height:2px;background:#000"></div>
<div class="a " style="left:389px;top:409px;width:1px;height:2px;background:#fff"></div>
<div class="a " style="left:392px;top:68px;width:1288px;height:22px;background:linear-gradient(180deg,#fafaf9 0%,#eeede9 45%,#dad7ce 100%)"></div>
<div class="a " style="left:392px;top:90px;width:1288px;height:1px;background:#16277e"></div>
<div class="a " style="left:392px;top:91px;width:1288px;height:3px;background:#b5bedc"></div>
<div class="a " style="left:626px;top:70px;width:93px;height:21px;background:#b5bedc;border:1px solid #16277e;border-bottom:none"></div>
<svg style="left:402px;top:72px" width="15" height="15" viewBox="0 0 15 15"><defs><radialGradient id="cg2" cx="0.38" cy="0.32" r="0.7"><stop offset="0" stop-color="#5ff0e8"/><stop offset="0.45" stop-color="#0aa8a8"/><stop offset="1" stop-color="#004848"/></radialGradient></defs><circle cx="7.2" cy="7" r="7" fill="url(#cg2)"/><rect x="7.6" y="7.600" width="6.800" height="7" fill="#101010"/><path d="M7.600 14.600V7.600H14.400" fill="none" stroke="#fff" stroke-width="1.300"/></svg>
<div class="t " style="left:422px;top:76px;letter-spacing:-0.291px;">SW Versionen.cc</div>
<div class="a " style="left:507px;top:72px;width:1px;height:17px;background:#a0a0a0"></div>
<div class="a " style="left:508px;top:72px;width:1px;height:17px;background:#fff"></div>
<svg style="left:513px;top:72px" width="15" height="15" viewBox="0 0 15 15"><defs><radialGradient id="cg3" cx="0.38" cy="0.32" r="0.7"><stop offset="0" stop-color="#5ff0e8"/><stop offset="0.45" stop-color="#0aa8a8"/><stop offset="1" stop-color="#004848"/></radialGradient></defs><circle cx="7.2" cy="7" r="7" fill="url(#cg3)"/><rect x="7.6" y="7.600" width="6.800" height="7" fill="#101010"/><path d="M7.600 14.600V7.600H14.400" fill="none" stroke="#fff" stroke-width="1.300"/></svg>
<div class="t " style="left:533.5px;top:76px;letter-spacing:-0.135px;">Haussteuerung.cc</div>
<svg style="left:632px;top:72px" width="15" height="15" viewBox="0 0 15 15"><defs><radialGradient id="cg4" cx="0.38" cy="0.32" r="0.7"><stop offset="0" stop-color="#5ff0e8"/><stop offset="0.45" stop-color="#0aa8a8"/><stop offset="1" stop-color="#004848"/></radialGradient></defs><circle cx="7.2" cy="7" r="7" fill="url(#cg4)"/><rect x="7.6" y="7.600" width="6.800" height="7" fill="#101010"/><path d="M7.600 14.600V7.600H14.400" fill="none" stroke="#fff" stroke-width="1.300"/></svg>
<div class="t " style="left:651px;top:76px;letter-spacing:-0.318px;">Pages.cc</div>
<div class="a " style="left:702px;top:73px;width:15px;height:15px;border:1px solid #000;background:#d4d0c8"></div>
<svg style="left:702px;top:73px" width="15" height="15" viewBox="0 0 15 15"><path d="M4 4l7 7M11 4l-7 7" stroke="#000" stroke-width="1.6" fill="none"/></svg>
<div class="a " style="left:392px;top:94px;width:1288px;height:625px;background:#fff;border-top:1px solid #404040;border-left:2px solid #606060;border-bottom:1px solid #fff"></div>
<div class="a " style="left:394px;top:95px;width:28px;height:608px;background:linear-gradient(90deg,#d4d1ca 0%,#e6e4df 55%,#f1f0ec 100%)"></div>
<div class="a " style="left:422px;top:95px;width:1px;height:608px;background:#c8c6c0"></div>
<div class="a " style="left:423px;top:95px;width:6px;height:608px;background:#fff"></div>
<div class="a " style="left:429px;top:95px;width:1px;height:608px;background:#909090"></div>
<div class="a " style="left:1072px;top:95px;width:1px;height:608px;background:#c8c8c8"></div>
<div class="a" style="left:392px;top:95px;width:1270px;height:608px;overflow:hidden"><div class="a" style="left:-392px;top:-95px;width:1680px;height:1050px">
<div class="ln" style="top:96px">199</div>
<div class="code" style="top:95.25px">    <span class="k">case</span> pageFS20<span class="s">:</span>                   <span class="c">// Touchs von Rolladen Küche löschen</span></div>
<div class="ln" style="top:113px">200</div>
<div class="code" style="top:112.25px">    FS20_CLEAR<span class="s">(</span><span class="s">)</span><span class="s">;</span>               <span class="c">// U-Prg notwendig, da zu viel Befehlzeilen für switch</span></div>
<div class="ln" style="top:130px">201</div>
<div class="code" style="top:129.25px"><span class="c"> /*   eDIP_cmd4_8(&#x27;A&#x27;,&#x27;L&#x27;,RKUtimedown,1);   // vorige Touchbereiche löschen</span></div>
<div class="ln" style="top:147px">202</div>
<div class="code" style="top:146.25px"><span class="c">    eDIP_cmd4_8(&#x27;A&#x27;,&#x27;L&#x27;,RKOtimedown,1);</span></div>
<div class="ln" style="top:164px">203</div>
<div class="code" style="top:163.25px"><span class="c">    eDIP_cmd4_8(&#x27;A&#x27;,&#x27;L&#x27;,RWZTtimedown,1);</span></div>
<div class="ln" style="top:181px">204</div>
<div class="code" style="top:180.25px"><span class="c">    eDIP_cmd4_8(&#x27;A&#x27;,&#x27;L&#x27;,RWZStimedown,1);</span></div>
<div class="ln" style="top:198px">205</div>
<div class="code" style="top:197.25px"><span class="c">    eDIP_cmd4_8(&#x27;A&#x27;,&#x27;L&#x27;,RWZWtimedown,1);</span></div>
<div class="ln" style="top:215px">206</div>
<div class="code" style="top:214.25px"><span class="c">    eDIP_cmd4_8(&#x27;A&#x27;,&#x27;L&#x27;,RGOtimedown,1);</span></div>
<div class="ln" style="top:232px">207</div>
<div class="code" style="top:231.25px"><span class="c">    eDIP_cmd4_8(&#x27;A&#x27;,&#x27;L&#x27;,RGTtimedown,1);</span></div>
<div class="ln" style="top:249px">208</div>
<div class="code" style="top:248.25px"><span class="c">    eDIP_cmd4_8(&#x27;A&#x27;,&#x27;L&#x27;,RSTtimedown,1);</span></div>
<div class="ln" style="top:266px">209</div>
<div class="code" style="top:265.25px"><span class="c">    eDIP_cmd4_8(&#x27;A&#x27;,&#x27;L&#x27;,RKWtimedown,1);       */</span></div>
<div class="ln" style="top:283px">210</div>
<div class="code" style="top:282.25px">    RS232<span class="s">=</span>WR_RS<span class="s">;</span>                        <span class="c">// RS232 auf WR zurückstellen (Mux und Baudrate)</span></div>
<div class="ln" style="top:300px">211</div>
<div class="code" style="top:299.25px">    <span class="k">break</span><span class="s">;</span></div>
<div class="ln" style="top:317px">212</div>
<div class="code" style="top:316.25px">    <span class="k">case</span> pageHEIZUNG_STAT<span class="s">:</span>                   <span class="c">// Touchs löschen</span></div>
<div class="ln" style="top:334px">213</div>
<div class="code" style="top:333.25px">    HEIZUNG_STAT_CLEAR<span class="s">(</span><span class="s">)</span><span class="s">;</span>       <span class="c">// U-Prg notwendig, da zu viel Befehlzeilen für switch</span></div>
<div class="ln" style="top:351px">214</div>
<div class="code" style="top:350.25px"><span class="c"> /*   eDIP_cmd4_8(&#x27;A&#x27;,&#x27;L&#x27;,HEIZGautodown,1);   // vorige Touchbereiche löschen</span></div>
<div class="ln" style="top:368px">215</div>
<div class="code" style="top:367.25px"><span class="c">    eDIP_cmd4_8(&#x27;A&#x27;,&#x27;L&#x27;,HEIZGhanddown,1);</span></div>
<div class="ln" style="top:385px">216</div>
<div class="code" style="top:384.25px"><span class="c">    eDIP_cmd4_8(&#x27;A&#x27;,&#x27;L&#x27;,GasEINdown,1);</span></div>
<div class="ln" style="top:402px">217</div>
<div class="code" style="top:401.25px"><span class="c">    eDIP_cmd4_8(&#x27;A&#x27;,&#x27;L&#x27;,PufferEINdown,1);</span></div>
<div class="ln" style="top:419px">218</div>
<div class="code" style="top:418.25px"><span class="c">    eDIP_cmd4_8(&#x27;A&#x27;,&#x27;L&#x27;,HK_EINdown,1);</span></div>
<div class="ln" style="top:436px">219</div>
<div class="code" style="top:435.25px"><span class="c">    eDIP_cmd4_8(&#x27;A&#x27;,&#x27;L&#x27;,HK_AUSdown,1);</span></div>
<div class="ln" style="top:453px">220</div>
<div class="code" style="top:452.25px"><span class="c">    eDIP_cmd4_8(&#x27;A&#x27;,&#x27;L&#x27;,FBH_EINdown,1);</span></div>
<div class="ln" style="top:470px">221</div>
<div class="code" style="top:469.25px"><span class="c">    eDIP_cmd4_8(&#x27;A&#x27;,&#x27;L&#x27;,FBH_AUSdown,1);</span></div>
<div class="ln" style="top:487px">222</div>
<div class="code" style="top:486.25px"><span class="c">    eDIP_cmd4_8(&#x27;A&#x27;,&#x27;L&#x27;,OfenEINdown,1);</span></div>
<div class="ln" style="top:504px">223</div>
<div class="code" style="top:503.25px"><span class="c">    eDIP_cmd4_8(&#x27;A&#x27;,&#x27;L&#x27;,OfenAUSdown,1);</span></div>
<div class="ln" style="top:521px">224</div>
<div class="code" style="top:520.25px"><span class="c">    eDIP_cmd4_8(&#x27;A&#x27;,&#x27;L&#x27;,HKMischerAUFdown,1);</span></div>
<div class="ln" style="top:538px">225</div>
<div class="code" style="top:537.25px"><span class="c">    eDIP_cmd4_8(&#x27;A&#x27;,&#x27;L&#x27;,HKMischerZUdown,1);</span></div>
<div class="ln" style="top:555px">226</div>
<div class="code" style="top:554.25px"><span class="c">    eDIP_cmd4_8(&#x27;A&#x27;,&#x27;L&#x27;,FBHMischerAUFdown,1);</span></div>
<div class="ln" style="top:572px">227</div>
<div class="code" style="top:571.25px"><span class="c">    eDIP_cmd4_8(&#x27;A&#x27;,&#x27;L&#x27;,FBHMischerZUdown,1);  */</span></div>
<div class="ln" style="top:589px">228</div>
<div class="code" style="top:588.25px">    <span class="k">break</span><span class="s">;</span></div>
<div class="ln" style="top:606px">229</div>
<div class="code" style="top:605.25px">    <span class="k">case</span> pageHEIZUNG_EINSTLLG<span class="s">:</span>                   <span class="c">// Touchs löschen</span></div>
<div class="ln" style="top:623px">230</div>
<div class="code" style="top:622.25px">    eDIP_cmd4_8<span class="s">(</span><span class="q">&#x27;A&#x27;</span><span class="s">,</span><span class="q">&#x27;L&#x27;</span><span class="s">,</span>Hzgwahl_down<span class="s">,</span><span class="n">1</span><span class="s">)</span><span class="s">;</span></div>
<div class="ln" style="top:640px">231</div>
<div class="code" style="top:639.25px">    eDIP_cmd4_8<span class="s">(</span><span class="q">&#x27;A&#x27;</span><span class="s">,</span><span class="q">&#x27;L&#x27;</span><span class="s">,</span>HK_Tempdown<span class="s">,</span><span class="n">1</span><span class="s">)</span><span class="s">;</span></div>
<div class="ln" style="top:657px">232</div>
<div class="code" style="top:656.25px">    eDIP_cmd4_8<span class="s">(</span><span class="q">&#x27;A&#x27;</span><span class="s">,</span><span class="q">&#x27;L&#x27;</span><span class="s">,</span>FBH_Tempdown<span class="s">,</span><span class="n">1</span><span class="s">)</span><span class="s">;</span></div>
<div class="ln" style="top:674px">233</div>
<div class="code" style="top:673.25px">    <span class="k">break</span><span class="s">;</span></div>
<div class="ln" style="top:691px">234</div>
<div class="code" style="top:690.25px">    <span class="k">case</span> pageHEIZUNG_ZEIT<span class="s">:</span>                   <span class="c">// Touchs von Rolladen Küche löschen</span></div>
</div></div>
<div class="a " style="left:816px;top:265px;width:2px;height:17px;background:#000"></div>
<div class="a tr" style="left:1662px;top:95px;width:16px;height:608px;"></div>
<div class="a rs" style="left:1662px;top:95px;width:16px;height:16px;"></div>
<svg style="left:1662px;top:95px" width="16" height="16" viewBox="0 0 16 16"><polygon points="4.5,9.5 11.5,9.5 8,6" fill="#000"/></svg>
<div class="a rs" style="left:1662px;top:687px;width:16px;height:16px;"></div>
<svg style="left:1662px;top:687px" width="16" height="16" viewBox="0 0 16 16"><polygon points="4.5,6.5 11.5,6.5 8,10" fill="#000"/></svg>
<div class="a rs" style="left:1662px;top:154px;width:16px;height:8px;"></div>
<div class="a tr" style="left:394px;top:703px;width:1268px;height:16px;"></div>
<div class="a rs" style="left:394px;top:703px;width:16px;height:16px;"></div>
<svg style="left:394px;top:703px" width="16" height="16" viewBox="0 0 16 16"><polygon points="9.5,4.5 9.5,11.5 6,8" fill="#000"/></svg>
<div class="a rs" style="left:1646px;top:703px;width:16px;height:16px;"></div>
<svg style="left:1646px;top:703px" width="16" height="16" viewBox="0 0 16 16"><polygon points="6.5,4.5 6.5,11.5 10,8" fill="#000"/></svg>
<div class="a rs" style="left:410px;top:703px;width:236px;height:16px;"></div>
<div class="a " style="left:1662px;top:703px;width:16px;height:16px;background:#d4d0c8"></div>
<div class="a " style="left:1678px;top:94px;width:2px;height:626px;background:#d4d0c8;border-right:1px solid #fff"></div>
<div class="a " style="left:240px;top:134px;width:549px;height:19px;background:#ffffe1;border:1px solid;border-color:#d4d0c8 #404040 #404040 #d4d0c8;box-shadow:2px 2px 3px rgba(0,0,0,.45)"></div>
<div class="t tip" style="left:242.5px;top:137.5px;letter-spacing:-0.059px;">E:\Elektronik\Haussteuerung CControl pro\Haussteuerung beta\Aktuelle Haussteuerung beta\Preprozessordef.cc</div>
<div class="a " style="left:822px;top:720px;width:2px;height:2px;background:#000"></div>
<div class="a " style="left:823px;top:721px;width:2px;height:1px;background:#fff"></div>
<div class="a " style="left:826px;top:720px;width:2px;height:2px;background:#000"></div>
<div class="a " style="left:827px;top:721px;width:2px;height:1px;background:#fff"></div>
<div class="a " style="left:830px;top:720px;width:2px;height:2px;background:#000"></div>
<div class="a " style="left:831px;top:721px;width:2px;height:1px;background:#fff"></div>
<div class="a " style="left:834px;top:720px;width:2px;height:2px;background:#000"></div>
<div class="a " style="left:835px;top:721px;width:2px;height:1px;background:#fff"></div>
<div class="a " style="left:838px;top:720px;width:2px;height:2px;background:#000"></div>
<div class="a " style="left:839px;top:721px;width:2px;height:1px;background:#fff"></div>
<div class="a " style="left:842px;top:720px;width:2px;height:2px;background:#000"></div>
<div class="a " style="left:843px;top:721px;width:2px;height:1px;background:#fff"></div>
<div class="a " style="left:846px;top:720px;width:2px;height:2px;background:#000"></div>
<div class="a " style="left:847px;top:721px;width:2px;height:1px;background:#fff"></div>
<div class="a " style="left:850px;top:720px;width:2px;height:2px;background:#000"></div>
<div class="a " style="left:851px;top:721px;width:2px;height:1px;background:#fff"></div>
<div class="a " style="left:854px;top:720px;width:2px;height:2px;background:#000"></div>
<div class="a " style="left:855px;top:721px;width:2px;height:1px;background:#fff"></div>
<div class="a " style="left:0px;top:751px;width:1680px;height:1px;background:#f4f3f0"></div>
<div class="a " style="left:3px;top:729px;width:60px;height:23px;background:#d4d0c8;border-top:1px solid #fff;border-left:1px solid #fff;border-right:1px solid #404040;box-shadow:inset -1px 0 0 #808080;border-radius:2px 2px 0 0"></div>
<div class="t " style="left:6.5px;top:734px;letter-spacing:-0.270px;">Meldungen</div>
<div class="a " style="left:123px;top:729px;width:39px;height:23px;background:#d4d0c8;border-top:1px solid #fff;border-left:1px solid #fff;border-right:1px solid #404040;box-shadow:inset -1px 0 0 #808080;border-radius:2px 2px 0 0"></div>
<div class="t " style="left:126.5px;top:734px;letter-spacing:-0.438px;">Suche</div>
<div class="a " style="left:61px;top:727px;width:63px;height:26px;background:#d4d0c8;border-top:1px solid #fff;border-left:1px solid #fff;border-right:1px solid #404040;box-shadow:inset -1px 0 0 #808080;border-radius:2px 2px 0 0"></div>
<div class="t " style="left:67px;top:734px;letter-spacing:-0.255px;">Ausgaben</div>
<div class="a sk" style="left:1px;top:752px;width:473px;height:244px;"></div>
<div class="a mono" style="left:4px;top:769px;white-space:pre;font-size:11.67px;line-height:14px;height:14px">Conrad C-Control Pro 2014</div>
<div class="a mono" style="left:4px;top:783px;white-space:pre;font-size:11.67px;line-height:14px;height:14px">0K0</div>
<div class="a mono" style="left:4px;top:797px;white-space:pre;font-size:11.67px;line-height:14px;height:14px">ÿ!</div>
<div class="a mono" style="left:4px;top:811px;white-space:pre;font-size:11.67px;line-height:14px;height:14px">Interpreter gestartet - 4kb RAM</div>
<div class="a mono" style="left:4px;top:853px;white-space:pre;font-size:11.67px;line-height:14px;height:14px">Conrad C-Control Pro 2014</div>
<div class="a mono" style="left:4px;top:867px;white-space:pre;font-size:11.67px;line-height:14px;height:14px">0K0</div>
<div class="a mono" style="left:4px;top:909px;white-space:pre;font-size:11.67px;line-height:14px;height:14px">Conrad C-Control Pro 2014</div>
<div class="a mono" style="left:4px;top:923px;white-space:pre;font-size:11.67px;line-height:14px;height:14px">0K0</div>
<div class="a mono" style="left:4px;top:937px;white-space:pre;font-size:11.67px;line-height:14px;height:14px">ÿ!</div>
<div class="a mono" style="left:4px;top:951px;white-space:pre;font-size:11.67px;line-height:14px;height:14px">Interpreter gestartet - 4kb RAM</div>
<div class="a tr" style="left:457px;top:754px;width:16px;height:224px;"></div>
<div class="a rs" style="left:457px;top:754px;width:16px;height:16px;"></div>
<svg style="left:457px;top:754px" width="16" height="16" viewBox="0 0 16 16"><polygon points="4.5,9.5 11.5,9.5 8,6" fill="#000"/></svg>
<div class="a rs" style="left:457px;top:962px;width:16px;height:16px;"></div>
<svg style="left:457px;top:962px" width="16" height="16" viewBox="0 0 16 16"><polygon points="4.5,6.5 11.5,6.5 8,10" fill="#000"/></svg>
<div class="a rs" style="left:457px;top:955px;width:16px;height:7px;"></div>
<div class="a tr" style="left:3px;top:978px;width:454px;height:16px;"></div>
<div class="a rs" style="left:3px;top:978px;width:16px;height:16px;"></div>
<svg style="left:3px;top:978px" width="16" height="16" viewBox="0 0 16 16"><polygon points="9.5,4.5 9.5,11.5 6,8" fill="#000"/></svg>
<div class="a rs" style="left:441px;top:978px;width:16px;height:16px;"></div>
<svg style="left:441px;top:978px" width="16" height="16" viewBox="0 0 16 16"><polygon points="6.5,4.5 6.5,11.5 10,8" fill="#000"/></svg>
<div class="a rs" style="left:19px;top:978px;width:226px;height:16px;"></div>
<div class="a " style="left:457px;top:978px;width:16px;height:16px;background:#d4d0c8"></div>
<div class="a " style="left:474px;top:858px;width:2px;height:2px;background:#000"></div>
<div class="a " style="left:475px;top:859px;width:1px;height:2px;background:#fff"></div>
<div class="a " style="left:474px;top:862px;width:2px;height:2px;background:#000"></div>
<div class="a " style="left:475px;top:863px;width:1px;height:2px;background:#fff"></div>
<div class="a " style="left:474px;top:866px;width:2px;height:2px;background:#000"></div>
<div class="a " style="left:475px;top:867px;width:1px;height:2px;background:#fff"></div>
<div class="a " style="left:474px;top:870px;width:2px;height:2px;background:#000"></div>
<div class="a " style="left:475px;top:871px;width:1px;height:2px;background:#fff"></div>
<div class="a " style="left:474px;top:874px;width:2px;height:2px;background:#000"></div>
<div class="a " style="left:475px;top:875px;width:1px;height:2px;background:#fff"></div>
<div class="a " style="left:474px;top:878px;width:2px;height:2px;background:#000"></div>
<div class="a " style="left:475px;top:879px;width:1px;height:2px;background:#fff"></div>
<div class="a " style="left:474px;top:882px;width:2px;height:2px;background:#000"></div>
<div class="a " style="left:475px;top:883px;width:1px;height:2px;background:#fff"></div>
<div class="a " style="left:474px;top:886px;width:2px;height:2px;background:#000"></div>
<div class="a " style="left:475px;top:887px;width:1px;height:2px;background:#fff"></div>
<div class="a " style="left:474px;top:890px;width:2px;height:2px;background:#000"></div>
<div class="a " style="left:475px;top:891px;width:1px;height:2px;background:#fff"></div>
<div class="a " style="left:477px;top:752px;width:1203px;height:246px;background:#fff;border-top:1px solid #808080;border-left:2px solid;border-left-color:#909090;border-right:3px solid #5c5c5c;border-bottom:3px solid #5c5c5c"></div>
<div class="a " style="left:477px;top:753px;width:1px;height:242px;background:#d8d6d0"></div>
<div class="a " style="left:479px;top:753px;width:458px;height:19px;background:#e8e6e0;border-bottom:1px solid #9a988f;border-right:1px solid #9a988f;border-top:1px solid #fff"></div>
<div class="a " style="left:798px;top:754px;width:1px;height:17px;background:#9a988f"></div>
<div class="a " style="left:799px;top:754px;width:1px;height:17px;background:#fff"></div>
<div class="t " style="left:482px;top:757px;letter-spacing:-0.353px;">Variablen</div>
<div class="t " style="left:803px;top:757px;letter-spacing:0.020px;">Wert</div>
<div class="a " style="left:0px;top:998px;width:1680px;height:25px;background:#d4d0c8"></div>
<div class="a sk1" style="left:0px;top:1000px;width:66px;height:21px;"></div>
<div class="a sk1" style="left:69px;top:1000px;width:32px;height:21px;"></div>
<div class="a sk1" style="left:102px;top:1000px;width:1239px;height:21px;"></div>
<div class="a sk1" style="left:1343px;top:1000px;width:201px;height:21px;"></div>
<div class="a sk1" style="left:1546px;top:1000px;width:36px;height:21px;"></div>
<div class="t " style="left:15.5px;top:1005px;letter-spacing:-0.024px;">209:48</div>
<div class="t " style="left:75.5px;top:1005px;letter-spacing:-0.489px;">Einf</div>
<div class="t stp" style="left:105px;top:1005px;letter-spacing:-0.057px;">E:\Elektronik\Haussteuerung CControl pro\Haussteuerung beta\Aktuelle Haussteuerung beta\Preprozessordef.cc</div>
<div class="a " style="left:1555px;top:1007px;width:17px;height:8px;background:#14c814;border:1px solid;border-color:#0a7a0a #8cf08c #8cf08c #0a7a0a"></div>
<div class="t " style="left:1588px;top:1005px;letter-spacing:-1.189px;color:#808080">CAPS</div>
<div class="t " style="left:1622px;top:1005px;letter-spacing:-1.250px;">NUM</div>
<div class="t " style="left:1652px;top:1005px;letter-spacing:-1.336px;color:#808080">SCRL</div>
<div class="a " style="left:0px;top:1023px;width:1680px;height:27px;background:#d4d0c8;border-top:1px solid #fff"></div>
<div class="a rs" style="left:2px;top:1026px;width:52px;height:22px;"></div>
<svg style="left:4.5px;top:1027.5px" width="16" height="16" viewBox="0 0 16 16"><path d="M1 3.5c2-1.2 4-1.2 6 0l-0.8 5c-2-1.2-4-1.2-6 0z" fill="#e8452c"/><path d="M8 3.8c2 1.2 4 1.2 6 0l-0.8 5c-2 1.2-4 1.2-6 0z" fill="#6ab83a"/><path d="M0.2 9.5c2-1.2 4-1.2 6 0l-0.8 5c-2-1.2-4-1.2-6 0z" fill="#3a78d8"/><path d="M7.2 9.8c2 1.2 4 1.2 6 0l-0.8 5c-2 1.2-4 1.2-6 0z" fill="#f4c020"/></svg>
<div class="t " style="left:22px;top:1030.5px;font-weight:bold;letter-spacing:0.588px;">Start</div>
<div class="a " style="left:61px;top:1028px;width:3px;height:18px;border:1px solid;border-color:#fff #808080 #808080 #fff"></div>
<svg style="left:71px;top:1029px" width="16" height="16" viewBox="0 0 16 16"><rect x="0.5" y="0.5" width="15" height="15" fill="#4f8f5a" stroke="#2f5f3a"/><path d="M8 2v12M2 8h12M3.5 3.5l9 9M12.5 3.5l-9 9" stroke="#e8f0e8" stroke-width="1"/><circle cx="8" cy="8" r="2.2" fill="#c8c8c8" stroke="#404040" stroke-width="0.6"/></svg>
<svg style="left:94px;top:1029px" width="16" height="16" viewBox="0 0 16 16"><circle cx="8" cy="3.5" r="2.8" fill="#7aa8f0"/><path d="M4 7h8v5.5c0 1.5-1 2.5-2.5 2.5h-3C5 15 4 14 4 12.5z" fill="#5a88e0"/><path d="M5 8h3v6H6.2C5.4 14 5 13.4 5 12.6z" fill="#c8dcff"/></svg>
<svg style="left:117px;top:1029.5px" width="15" height="15" viewBox="0 0 15 15"><defs><radialGradient id="cg5" cx="0.38" cy="0.32" r="0.7"><stop offset="0" stop-color="#5ff0e8"/><stop offset="0.45" stop-color="#0aa8a8"/><stop offset="1" stop-color="#004848"/></radialGradient></defs><circle cx="7.2" cy="7" r="7" fill="url(#cg5)"/><rect x="7.6" y="7.600" width="6.800" height="7" fill="#101010"/><path d="M7.600 14.600V7.600H14.400" fill="none" stroke="#fff" stroke-width="1.300"/></svg>
<svg style="left:140px;top:1029px" width="16" height="16" viewBox="0 0 16 16"><rect x="0.5" y="0.5" width="15" height="15" fill="#2f5fb8" stroke="#1a3a80"/><path d="M1 9L15 2v5L1 13z" fill="#6a9ae8"/><text x="5" y="14.5" font-family="Liberation Sans,sans-serif" font-size="7" font-weight="bold" fill="#fff">3D</text></svg>
<svg style="left:163px;top:1029px" width="16" height="16" viewBox="0 0 16 16"><rect x="1.5" y="2.5" width="12" height="12" rx="2" fill="#3f7fd8" stroke="#1f4fa0"/><path d="M4 11c0-4 2-6 5-6s3 3 0 4H5.5" fill="none" stroke="#fff" stroke-width="1.6"/><path d="M10 0.5h5v6" fill="#dfeaff" stroke="#1f4fa0" stroke-width="0.8"/></svg>
<svg style="left:186px;top:1029px" width="16" height="16" viewBox="0 0 16 16"><circle cx="9" cy="9" r="6.8" fill="#f8e020" stroke="#504000" stroke-width="1"/><circle cx="7" cy="7.5" r="1" fill="#000"/><circle cx="11" cy="7.5" r="1" fill="#000"/><path d="M5.5 11c1.5 2 5.5 2 7 0" fill="none" stroke="#000" stroke-width="1"/><rect x="0.5" y="0.5" width="4" height="9" fill="#1a2a7a" stroke="#000" stroke-width="0.6"/><rect x="1.5" y="1.8" width="2" height="2.2" fill="#8cf0a0"/></svg>
<svg style="left:209px;top:1029px" width="16" height="16" viewBox="0 0 16 16"><path d="M8 1c3 0 5 2 5 4.6 0 2-1.5 3-2 4.9H5c-0.5-1.900-2-2.900-2-4.900C3 3 5 1 8 1z" fill="#fff8b0" stroke="#b0a040" stroke-width="0.8"/><rect x="5.5" y="11" width="5" height="4" fill="#8a8a8a" stroke="#505050" stroke-width="0.6"/><path d="M8 -0.500v-0.500M1.500 2l1 1M14.500 2l-1 1" stroke="#f0d020" stroke-width="1"/><circle cx="6.600" cy="5" r="0.600" fill="#000"/><circle cx="9.400" cy="5" r="0.600" fill="#000"/><path d="M6.500 7c1 0.800 2 0.800 3 0" fill="none" stroke="#000" stroke-width="0.600"/></svg>
<svg style="left:232px;top:1029px" width="16" height="16" viewBox="0 0 16 16"><circle cx="8" cy="8" r="7.3" fill="#e8e8e8"/><path d="M8 8L1.700 4.300A7.300 7.300 0 0 1 14.300 4.300z" fill="#e04030"/><path d="M8 8l6.300-3.700A7.300 7.300 0 0 1 8 15.300z" fill="#f4c828"/><path d="M8 8v7.300A7.300 7.300 0 0 1 1.700 4.300z" fill="#3fa84a"/><circle cx="8" cy="8" r="3.300" fill="#fff"/><circle cx="8" cy="8" r="2.500" fill="#4a86e8"/></svg>
<svg style="left:255px;top:1029px" width="16" height="16" viewBox="0 0 16 16"><circle cx="8" cy="8" r="7.300" fill="#2f5fc0" stroke="#1a3a80" stroke-width="0.6"/><path d="M1.500 7c3-2.500 9-3 13 0" fill="none" stroke="#e8f0ff" stroke-width="1.300"/><path d="M1.500 10.500c3-2 9-2.300 13 0" fill="none" stroke="#9ab8f0" stroke-width="1"/><ellipse cx="6" cy="4.500" rx="3" ry="1.500" fill="#8ab0f8" opacity="0.8"/></svg>
<svg style="left:278px;top:1029px" width="16" height="16" viewBox="0 0 16 16"><circle cx="9" cy="6.500" r="6" fill="#3f8fd0" stroke="#1a4a80" stroke-width="0.6"/><path d="M5 4c2 1 3 3 2 5M10 2c-1 2 1 3 3 3" fill="none" stroke="#5ab05a" stroke-width="1.600"/><circle cx="6.500" cy="8.500" r="4" fill="#d8e8f8" fill-opacity="0.700" stroke="#606060" stroke-width="1.300"/><path d="M9.500 11.500l4.500 4" stroke="#a06020" stroke-width="2"/></svg>
<svg style="left:301px;top:1029px" width="16" height="16" viewBox="0 0 16 16"><rect x="1.500" y="1.500" width="13" height="13" fill="#fff" stroke="#303030"/><rect x="1.500" y="1.500" width="13" height="3" fill="#303060"/><rect x="4" y="7" width="8" height="5" fill="#e8e8f0" stroke="#404060" stroke-width="0.700"/><text x="4.800" y="11.300" font-family="Liberation Sans,sans-serif" font-size="4.500" font-weight="bold" fill="#202060">&lt;&gt;</text></svg>
<svg style="left:324px;top:1029px" width="16" height="16" viewBox="0 0 16 16"><rect x="0.500" y="1.500" width="15" height="13" fill="#d8ecd8" stroke="#2f7a3a"/><rect x="1.500" y="2.500" width="13" height="11" fill="#3f9a4a"/><path d="M4 4.500l8 7M12 4.500l-8 7" stroke="#fff" stroke-width="2.200"/></svg>
<svg style="left:347px;top:1029px" width="16" height="16" viewBox="0 0 16 16"><rect x="0.500" y="0.500" width="15" height="15" fill="#fce8c0" stroke="#e09020"/><circle cx="8" cy="8" r="5" fill="#fff8e8" stroke="#e08a10" stroke-width="1.300"/><path d="M8 5v3.300h2.500" fill="none" stroke="#c06a00" stroke-width="1.100"/></svg>
<svg style="left:370px;top:1029px" width="16" height="16" viewBox="0 0 16 16"><rect x="0.500" y="1.500" width="15" height="13" fill="#dfe8f8" stroke="#2f4fa0"/><rect x="1.500" y="2.500" width="13" height="11" fill="#3f66c0"/><text x="2.500" y="12.300" font-family="Liberation Serif,serif" font-size="11" font-weight="bold" font-style="italic" fill="#fff">W</text></svg>
<svg style="left:393px;top:1029px" width="16" height="16" viewBox="0 0 16 16"><circle cx="8" cy="8" r="7.3" fill="#f07818"/><path d="M1.5 5C3 2 5.5 0.8 8 0.8c-2 1.200-3 2.500-3.300 4.200z" fill="#f8c030"/><circle cx="9.300" cy="6.800" r="4.700" fill="#3a5ac8"/><path d="M6 5c1.500-1.500 4-1.500 5.500 0" fill="none" stroke="#8ab0f0" stroke-width="1"/><path d="M4.600 7.500c1 0 2 0.500 2.500 1.500 1 1.500 3 1.800 4.500 1l1.500 1.500c-2 2-6 2-8-0.500z" fill="#f8a020"/></svg>
<svg style="left:416px;top:1029px" width="16" height="16" viewBox="0 0 16 16"><rect x="0.500" y="0.500" width="15" height="15" fill="#1c2cc0" stroke="#101880"/><rect x="0.500" y="0.500" width="15" height="5.500" fill="#e02020"/><path d="M2 3h2M5 3h2M8 3h2M11 3h3" stroke="#fff" stroke-width="1.200"/><path d="M1.500 15V8.500l3 4 3.500-5 3.500 5 3-4V15" fill="#e02020" stroke="#fff" stroke-width="1.100"/></svg>
<svg style="left:439px;top:1029px" width="16" height="16" viewBox="0 0 16 16"><path d="M3 1l2 2-1 3 4 7" fill="none" stroke="#606878" stroke-width="1.800"/><path d="M10 1v5M8.500 2h3" stroke="#303030" stroke-width="1.200"/><rect x="8" y="8" width="7" height="6" fill="#b8c8e8" stroke="#405090" stroke-width="0.800"/><rect x="9.500" y="9.500" width="4" height="3" fill="#e8f0ff"/><path d="M2 13l3-4" stroke="#c03030" stroke-width="1.600"/></svg>
<svg style="left:462px;top:1029px" width="16" height="16" viewBox="0 0 16 16"><rect x="0.500" y="0.500" width="15" height="15" fill="#fff" stroke="#c0c0c0"/><path d="M1 1h8L1 9z" fill="#6a4ad0"/><path d="M9.500 2v8h-7z" fill="#e03030"/><rect x="11" y="1" width="4" height="9.500" fill="#f4d020"/><rect x="5" y="11.500" width="10" height="3.500" fill="#30b040"/><rect x="1" y="9.500" width="3.500" height="5.500" fill="#3060e0"/></svg>
<svg style="left:485px;top:1029px" width="16" height="16" viewBox="0 0 16 16"><rect x="0.500" y="0.500" width="15" height="15" fill="#1a2ab8" stroke="#0a1470"/><circle cx="8" cy="8" r="3.800" fill="#f8e820"/><path d="M8 0.500v3M8 12.500v3M0.500 8h3M12.500 8h3M2.500 2.500l2.200 2.200M11.300 11.300l2.200 2.200M13.500 2.500l-2.200 2.200M2.500 13.500l2.200-2.200" stroke="#f8f8f8" stroke-width="1.300"/></svg>
<svg style="left:508px;top:1029px" width="16" height="16" viewBox="0 0 16 16"><path d="M7 1c3.500-0.500 7 1.500 7.800 5-2.500-2.500-6-2.500-8.300 0z" fill="#f08a18"/><path d="M15 7.500c0.500 3.500-1.500 6.500-5 7.500 2.500-2.500 2.500-6 0-8.300z" fill="#3f86e8"/><path d="M9 15c-3.500 0.500-7-1.500-7.800-5 2.500 2.500 6 2.500 8.300 0z" fill="#4ab03a"/><path d="M1 8.500C0.500 5 2.500 2 6 1 3.500 3.500 3.500 7 6 9.300z" fill="#e8b818"/></svg>
<svg style="left:531px;top:1029px" width="16" height="16" viewBox="0 0 16 16"><circle cx="8" cy="8" r="7" fill="#e89a28" stroke="#8a5a10" stroke-width="0.700"/><path d="M3 5c2-2 4-1 5 1s3 2 5 0M2 10c2-1 4 0 5 2M9 10c1 1 3 1 4 0" fill="none" stroke="#a86a10" stroke-width="1.300"/><ellipse cx="6" cy="4" rx="2.500" ry="1.300" fill="#f8d880" opacity="0.800"/><path d="M5 14l3 1.500 3-1.500" fill="#c87a18"/></svg>
<svg style="left:554px;top:1029px" width="16" height="16" viewBox="0 0 16 16"><rect x="0" y="0" width="16" height="16" fill="#f8e020"/><circle cx="5.500" cy="8" r="3.800" fill="none" stroke="#f09010" stroke-width="1.700"/><path d="M7 10.500l2 2.500" stroke="#f09010" stroke-width="1.500"/><path d="M9.500 4.500l2.500 7.500 2.500-7.500" fill="none" stroke="#f09010" stroke-width="1.500"/></svg>
<svg style="left:577px;top:1029px" width="16" height="16" viewBox="0 0 16 16"><path d="M6.500 2.500h6l2.500 2.500v10h-8.500z" fill="#f4f6fa" stroke="#8090a8" stroke-width="0.800"/><path d="M9 8h5M9 10h5M9 12h5" stroke="#a8b4c8" stroke-width="0.800"/><rect x="0.500" y="1.500" width="9" height="9" fill="#3f9a4a" stroke="#1f5f2a" stroke-width="0.800"/><path d="M2.500 3.500l5 5M7.500 3.500l-5 5" stroke="#fff" stroke-width="1.600"/></svg>
<svg style="left:600px;top:1029px" width="16" height="16" viewBox="0 0 16 16"><path d="M1 4h5l1.500 1.500H15V14H1z" fill="#e8c860" stroke="#a08020" stroke-width="0.800"/><path d="M1 7h14v7H1z" fill="#f8e490" stroke="#a08020" stroke-width="0.800"/></svg>
<svg style="left:623px;top:1029px" width="16" height="16" viewBox="0 0 16 16"><path d="M6.500 2.500h6l2.500 2.500v10h-8.500z" fill="#f4f6fa" stroke="#8090a8" stroke-width="0.800"/><path d="M9 8h5M9 10h5M9 12h5" stroke="#a8b4c8" stroke-width="0.800"/><rect x="0.500" y="1.500" width="9" height="9" fill="#3f9a4a" stroke="#1f5f2a" stroke-width="0.800"/><path d="M2.500 3.500l5 5M7.500 3.500l-5 5" stroke="#fff" stroke-width="1.600"/></svg>
<svg style="left:646px;top:1029px" width="16" height="16" viewBox="0 0 16 16"><path d="M8 1l1.500 0 4 12h-11l4-12z" fill="#f08a18"/><path d="M5.800 5h4.400l0.900 2.700H4.900z" fill="#fff"/><path d="M4.200 9.700h7.600l0.700 2.100h-9z" fill="#fff" opacity="0.900"/><path d="M1.500 13h13l0.500 2.500H1z" fill="#e07010" stroke="#a04a08" stroke-width="0.500"/></svg>
<svg style="left:669px;top:1029px" width="16" height="16" viewBox="0 0 16 16"><circle cx="8" cy="8" r="7.300" fill="#f8f8f8" stroke="#606060" stroke-width="0.600"/><path d="M8 0.700A7.300 7.300 0 0 1 15.300 8H8z" fill="#f08a18"/><path d="M15.300 8A7.300 7.300 0 0 1 8 15.300V8z" fill="#4ab040"/><path d="M8 15.300A7.300 7.300 0 0 1 0.700 8H8z" fill="#e8c020"/><path d="M0.700 8A7.300 7.300 0 0 1 8 0.700V8z" fill="#3a6ad8"/><circle cx="8" cy="8" r="4.300" fill="#2a4ab0"/><path d="M6.500 5.500v5l4.300-2.500z" fill="#fff"/></svg>
<svg style="left:692px;top:1029px" width="16" height="16" viewBox="0 0 16 16"><text x="-1" y="11" font-family="Liberation Sans,sans-serif" font-size="12" font-weight="bold" fill="#1a2ab8" stroke="#fff" stroke-width="1" paint-order="stroke">W</text><text x="8" y="14.500" font-family="Liberation Sans,sans-serif" font-size="12.500" font-weight="bold" fill="#e01828" stroke="#fff" stroke-width="1" paint-order="stroke">B</text></svg>
<div class="a " style="left:723px;top:1028px;width:3px;height:18px;border:1px solid;border-color:#fff #808080 #808080 #fff"></div>
<div class="a rs" style="left:731px;top:1026px;width:160px;height:22px;"></div>
<svg style="left:736px;top:1029px" width="16" height="16" viewBox="0 0 16 16"><circle cx="8" cy="8" r="7.3" fill="#f07818"/><path d="M1.5 5C3 2 5.5 0.8 8 0.8c-2 1.200-3 2.500-3.300 4.200z" fill="#f8c030"/><circle cx="9.300" cy="6.800" r="4.700" fill="#3a5ac8"/><path d="M6 5c1.500-1.500 4-1.500 5.500 0" fill="none" stroke="#8ab0f0" stroke-width="1"/><path d="M4.600 7.500c1 0 2 0.500 2.500 1.500 1 1.500 3 1.800 4.500 1l1.500 1.500c-2 2-6 2-8-0.500z" fill="#f8a020"/></svg>
<div class="t tb1" style="left:755px;top:1031px;letter-spacing:-0.102px;">C-Control Pro - Forum - ...</div>
<div class="a rs" style="left:894px;top:1026px;width:160px;height:22px;"></div>
<svg style="left:898px;top:1029px" width="16" height="16" viewBox="0 0 16 16"><path d="M1 3h5l1.500 1.500H14V14H1z" fill="#e8c860" stroke="#a08020" stroke-width="0.800"/><path d="M3 7h13l-2.500 7H1z" fill="#f8e490" stroke="#a08020" stroke-width="0.800"/><circle cx="7" cy="7" r="3.200" fill="#dfeaff" fill-opacity="0.800" stroke="#8090b0" stroke-width="0.700"/></svg>
<div class="t tb2" style="left:917.5px;top:1031px;letter-spacing:-0.039px;">Aktuelle Haussteuerung ...</div>
<div class="a tr" style="left:1057px;top:1026px;width:160px;height:22px;border:1px solid;border-color:#404040 #fff #fff #404040;box-shadow:inset 1px 1px 0 #808080"></div>
<svg style="left:1062px;top:1030px" width="15" height="15" viewBox="0 0 15 15"><defs><radialGradient id="cg6" cx="0.38" cy="0.32" r="0.7"><stop offset="0" stop-color="#5ff0e8"/><stop offset="0.45" stop-color="#0aa8a8"/><stop offset="1" stop-color="#004848"/></radialGradient></defs><circle cx="7.2" cy="7" r="7" fill="url(#cg6)"/><rect x="7.6" y="7.600" width="6.800" height="7" fill="#101010"/><path d="M7.600 14.600V7.600H14.400" fill="none" stroke="#fff" stroke-width="1.300"/></svg>
<div class="t tb3" style="left:1081px;top:1032px;font-weight:bold;letter-spacing:0.206px;">C-Control Pro IDE</div>
<div class="a sk1" style="left:1565px;top:1026px;width:113px;height:22px;"></div>
<div class="t " style="left:1570px;top:1030px;font-weight:bold;font-size:12px">«</div>
<svg style="left:1583px;top:1029px" width="16" height="16" viewBox="0 0 16 16"><rect x="6" y="0.500" width="8" height="7" fill="#3a4a9a" stroke="#1a2460" stroke-width="0.700"/><rect x="7.200" y="1.700" width="5.600" height="4.300" fill="#6a80d0"/><rect x="1" y="5" width="8" height="7" fill="#3a4a9a" stroke="#1a2460" stroke-width="0.700"/><rect x="2.200" y="6.200" width="5.600" height="4.300" fill="#7a90e0"/><path d="M2 13.500h7l1 2H1z" fill="#c8cce0"/><path d="M8 8.500h5l0.700 1.500H8z" fill="#c8cce0"/></svg>
<svg style="left:1601px;top:1029px" width="16" height="16" viewBox="0 0 16 16"><rect x="0.500" y="0.500" width="15" height="15" rx="2" fill="#d01828"/><path d="M3 2h10v7c0 3-2.500 5-5 6-2.500-1-5-3-5-6z" fill="#2a5ad0" stroke="#fff" stroke-width="0.900"/><path d="M5 5l3 6.500L11 5" fill="none" stroke="#fff" stroke-width="1.700"/><path d="M5.600 5.300l2.400 5.200 2.400-5.200" fill="none" stroke="#e02020" stroke-width="0.900"/></svg>
<svg style="left:1620px;top:1029px" width="16" height="16" viewBox="0 0 16 16"><circle cx="5.500" cy="3.800" r="3" fill="#f0c020" stroke="#a07a08" stroke-width="0.600"/><path d="M0.800 15V10c0-2.500 2-3.500 4.700-3.500S10 7.500 10 10v5z" fill="#f0c020" stroke="#a07a08" stroke-width="0.600"/><circle cx="10.500" cy="6.500" r="2.300" fill="#f4d040" stroke="#a07a08" stroke-width="0.600"/><path d="M7 15.500v-4c0-1.800 1.500-2.500 3.500-2.500s3.500 0.700 3.500 2.500v4z" fill="#f4d040" stroke="#a07a08" stroke-width="0.600"/><rect x="9" y="11" width="4" height="4" fill="#fff" stroke="#000" stroke-width="0.600"/><text x="9.600" y="14.600" font-family="Liberation Sans,sans-serif" font-size="4.500" font-weight="bold" fill="#000">R</text></svg>
<div class="t clk" style="left:1642px;top:1030px;letter-spacing:-0.065px;">22:55</div>
</body></html>
